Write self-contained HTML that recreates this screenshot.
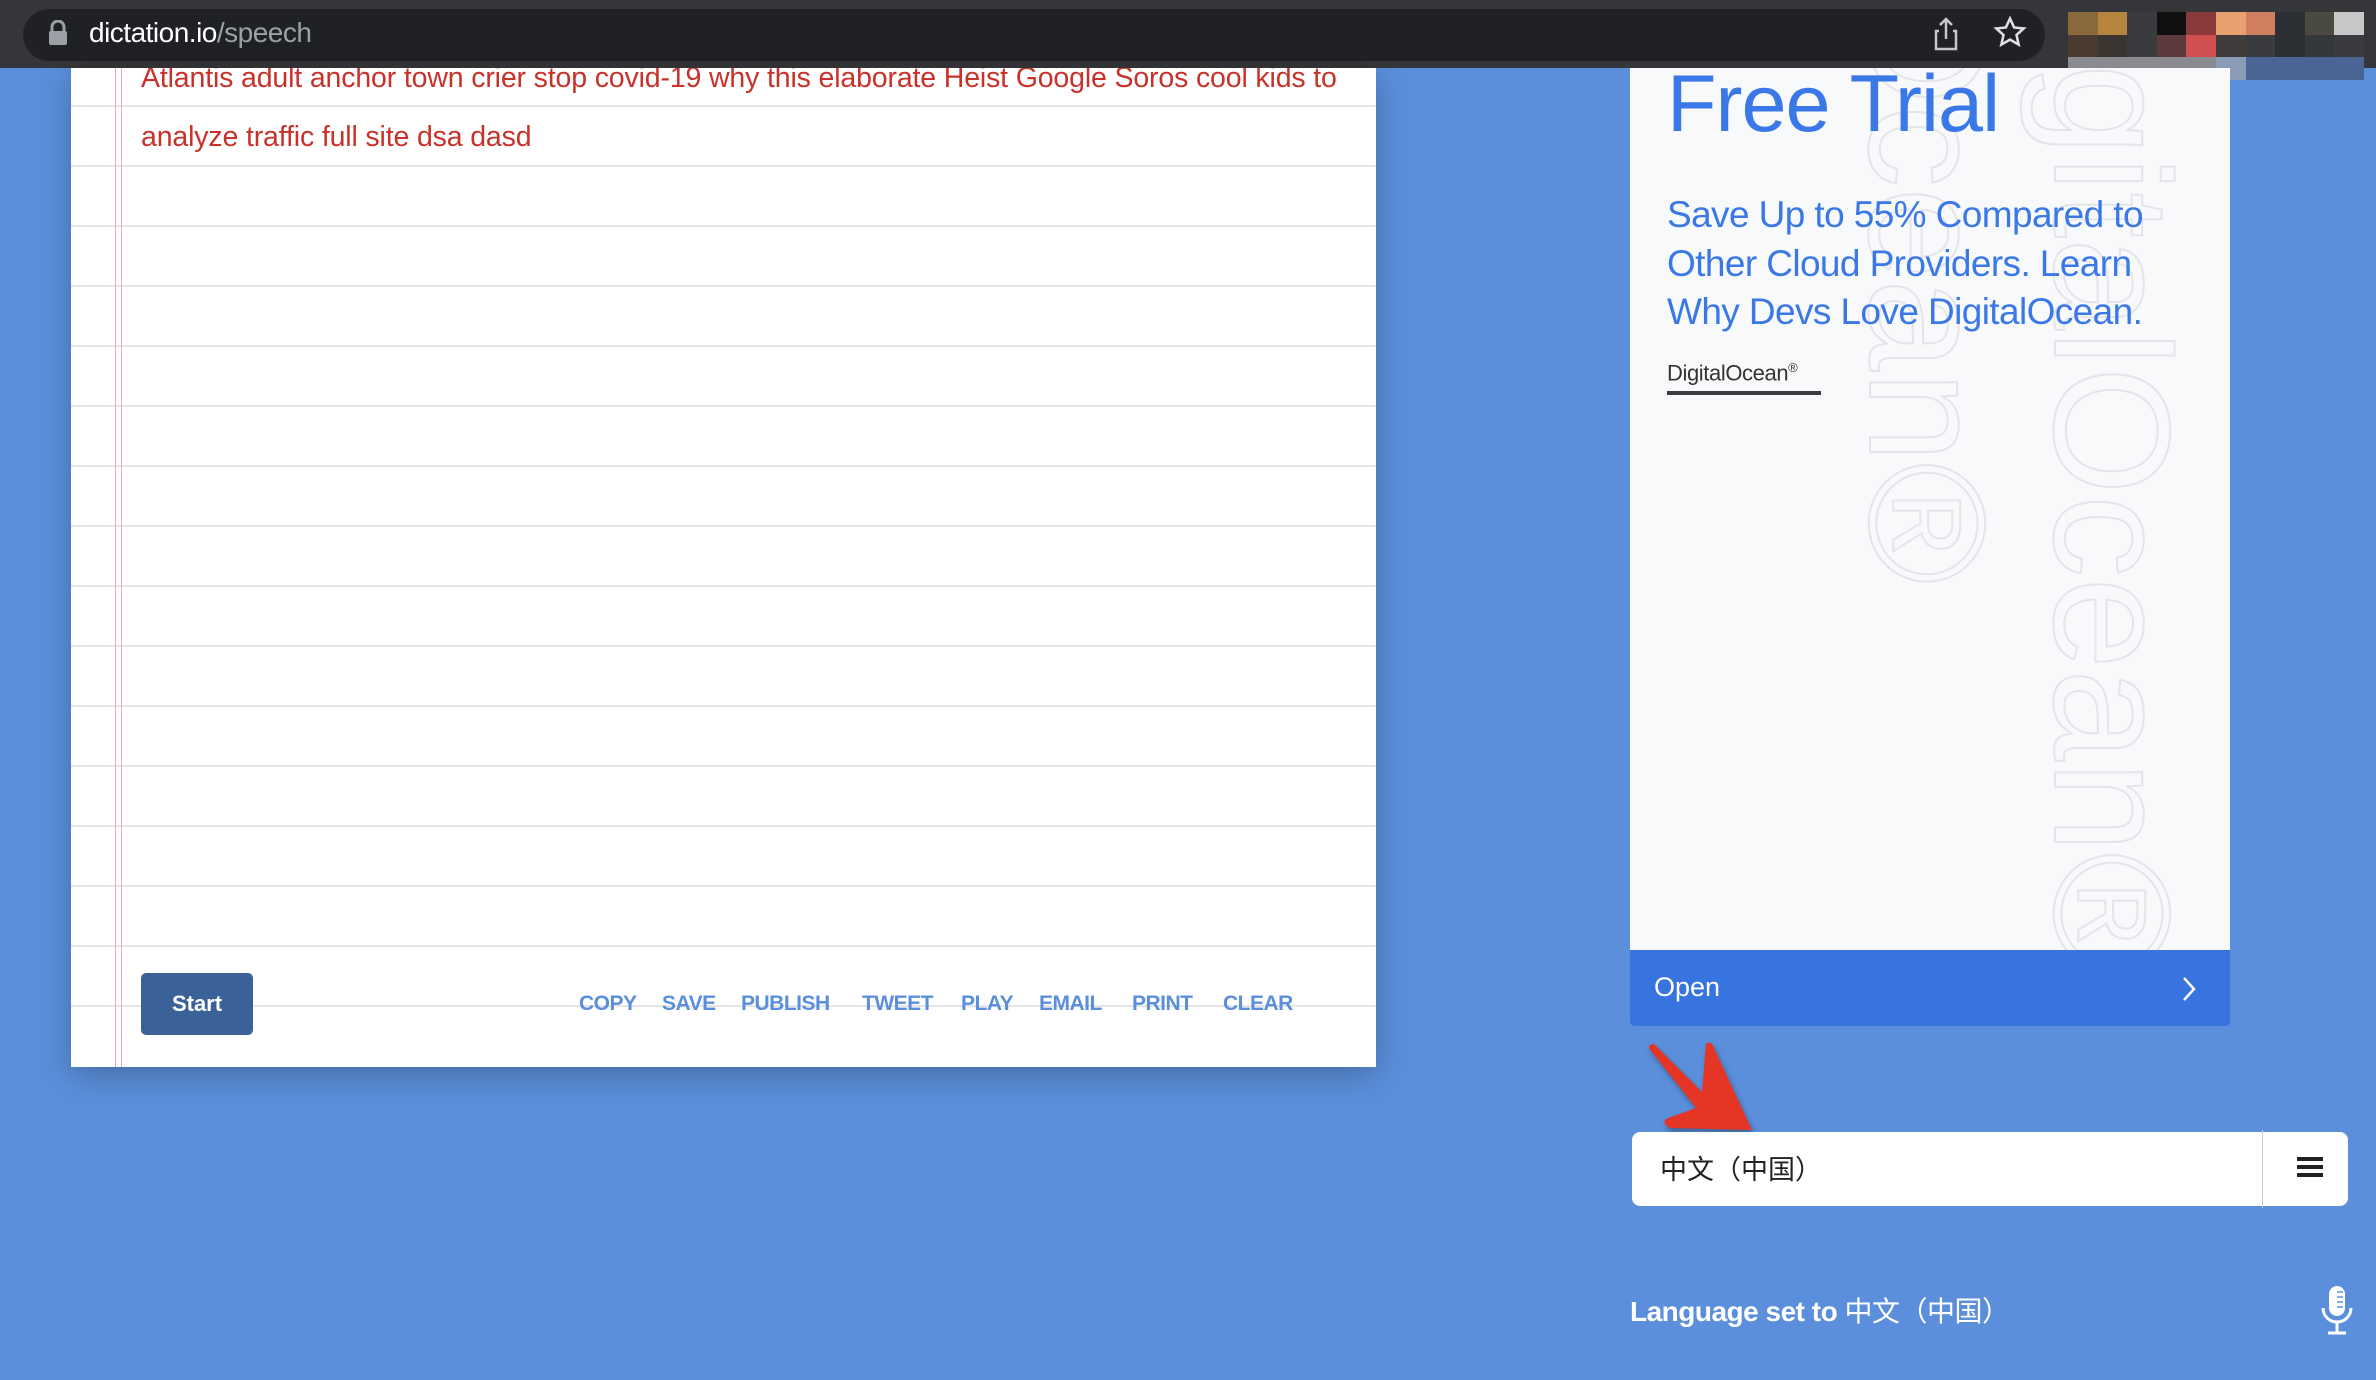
<!DOCTYPE html>
<html><head><meta charset="utf-8"><style>
*{margin:0;padding:0;box-sizing:border-box}
body{width:2376px;height:1380px;overflow:hidden;background:#5b8fdb;font-family:"Liberation Sans","Noto Sans CJK SC",sans-serif;position:relative}
.abs{position:absolute}
#bar{left:0;top:0;width:2376px;height:68px;background:#35363a}
#pill{left:23px;top:9px;width:2022px;height:52px;background:#202124;border-radius:26px}
#url{left:89px;top:17px;font-size:28px;color:#fff;letter-spacing:-0.5px}
#url span{color:#9aa0a6}
#paper{left:71px;top:68px;width:1305px;height:999px;background:#fff;box-shadow:0 8px 30px rgba(0,0,0,.25);overflow:hidden}
.hl{position:absolute;left:0;width:1305px;height:2px;background:#e6e6e6}
.vl{position:absolute;top:0;width:1px;height:999px;background:#e7a9bd}
.txt{position:absolute;left:70px;font-size:28.5px;color:#c8322a;white-space:nowrap;letter-spacing:-0.15px}
#start{left:70px;top:905px;width:112px;height:62px;background:#3b6199;border-radius:5px;color:#fff;font-weight:bold;font-size:22px;text-align:center;line-height:62px}
.lk{position:absolute;top:924px;font-size:21px;font-weight:bold;color:#5b8fdb;letter-spacing:-0.5px}
#ad{left:1630px;top:68px;width:600px;height:958px;background:#f8f9fb;overflow:hidden;border-radius:0 0 4px 4px}
#open{left:0;top:882px;width:600px;height:76px;background:#3774e0;color:#fff;font-size:27px;padding:0 0 0 24px;line-height:74px}
#sel{left:1632px;top:1132px;width:716px;height:74px;background:#fff;border-radius:8px}
</style></head><body>
<div id="bar" class="abs"></div>
<div id="pill" class="abs"></div>
<svg class="abs" style="left:48px;top:20px" width="20" height="26" viewBox="0 0 20 26"><path d="M4 11V7a6 6 0 0 1 12 0v4" stroke="#9aa0a6" stroke-width="3" fill="none"/><rect x="1" y="11" width="18" height="14" rx="2" fill="#9aa0a6"/></svg>
<div id="url" class="abs">dictation.io<span>/speech</span></div>
<svg class="abs" style="left:1930px;top:16px" width="32" height="36" viewBox="0 0 32 36"><path d="M16 3v20M10 9l6-6 6 6M9 15H6v18h20V15h-3" stroke="#c8c8c8" stroke-width="2.5" fill="none"/></svg>
<svg class="abs" style="left:1993px;top:15px" width="34" height="34" viewBox="0 0 24 24"><path d="M12 2.5l2.9 6.3 6.8.7-5.1 4.6 1.5 6.8L12 17.4l-6.1 3.5 1.5-6.8L2.3 9.5l6.8-.7z" stroke="#e0e0e0" stroke-width="1.8" fill="none"/></svg>
<div class="abs" style="left:2068px;top:12px;width:296px;height:68px;display:grid;grid-template-columns:repeat(10,1fr)">
<div style="background:#8a6a3c"></div><div style="background:#b5843d"></div><div style="background:#3a3b3e"></div><div style="background:#101010"></div><div style="background:#8a3a3a"></div><div style="background:#e9a070"></div><div style="background:#d08060"></div><div style="background:#2c3034"></div><div style="background:#4a4a40"></div><div style="background:#c8c8c8"></div>
<div style="background:#4a3a30"></div><div style="background:#3a3530"></div><div style="background:#3a3b3e"></div><div style="background:#5a3a3a"></div><div style="background:#d05050"></div><div style="background:#403c3c"></div><div style="background:#3a3b3e"></div><div style="background:#2c3034"></div><div style="background:#34383c"></div><div style="background:#3a3b3e"></div>
<div style="background:#8a8b90"></div><div style="background:#8a8b90"></div><div style="background:#8a8b90"></div><div style="background:#8a8b90"></div><div style="background:#8a8b90"></div><div style="background:#8a9bb8"></div><div style="background:#4a6494"></div><div style="background:#4a6494"></div><div style="background:#4a6494"></div><div style="background:#4a6494"></div>
</div>

<div id="paper" class="abs">
<div class="hl" style="top:37px"></div><div class="hl" style="top:97px"></div><div class="hl" style="top:157px"></div><div class="hl" style="top:217px"></div><div class="hl" style="top:277px"></div><div class="hl" style="top:337px"></div><div class="hl" style="top:397px"></div><div class="hl" style="top:457px"></div><div class="hl" style="top:517px"></div><div class="hl" style="top:577px"></div><div class="hl" style="top:637px"></div><div class="hl" style="top:697px"></div><div class="hl" style="top:757px"></div><div class="hl" style="top:817px"></div><div class="hl" style="top:877px"></div><div class="hl" style="top:937px"></div>
<div class="vl" style="left:44px"></div><div class="vl" style="left:50px"></div>
<div class="txt" style="top:-6px">Atlantis adult anchor town crier stop covid-19 why this elaborate Heist Google Soros cool kids to</div>
<div class="txt" style="top:53px">analyze traffic full site dsa dasd</div>
<div id="start" class="abs">Start</div>
<div class="lk" style="left:508px">COPY</div><div class="lk" style="left:591px">SAVE</div><div class="lk" style="left:670px">PUBLISH</div><div class="lk" style="left:791px">TWEET</div><div class="lk" style="left:890px">PLAY</div><div class="lk" style="left:968px">EMAIL</div><div class="lk" style="left:1061px">PRINT</div><div class="lk" style="left:1152px">CLEAR</div>
</div>

<div id="ad" class="abs">
<svg class="abs" style="left:0;top:0" width="600" height="882">
<g fill="none" stroke="#e3e5e8" stroke-width="2" font-family="Liberation Sans" font-size="165">
<text transform="translate(425,-160) rotate(90)">DigitalOcean®</text>
<text transform="translate(240,-550) rotate(90)">DigitalOcean®</text>
</g></svg>
<div class="abs" style="left:37px;top:-10px;font-size:81px;color:#3b78e7;letter-spacing:-1px">Free Trial</div>
<div class="abs" style="left:37px;top:123px;font-size:37px;line-height:48.5px;color:#3b78e7;letter-spacing:-0.6px">Save Up to 55% Compared to<br>Other Cloud Providers. Learn<br>Why Devs Love DigitalOcean.</div>
<div class="abs" style="left:37px;top:292px;font-size:22px;color:#333;letter-spacing:-0.4px">DigitalOcean<sup style="font-size:13px">®</sup></div>
<div class="abs" style="left:37px;top:323px;width:154px;height:4px;background:#3c3d42"></div>
<div id="open" class="abs">Open</div>
<svg class="abs" style="left:551px;top:907px" width="16" height="28" viewBox="0 0 16 28"><path d="M3 3l10 11L3 25" stroke="#fff" stroke-width="2.5" fill="none"/></svg>
</div>

<svg class="abs" style="left:1640px;top:1040px" width="120" height="100" viewBox="0 0 120 100"><path d="M12 12 Q5 5 14 4 L62 52 L66 4 Q72 0 74 8 L112 90 L30 88 Q20 82 28 78 L56 68 Z" fill="#e53525" style="filter:drop-shadow(2px 4px 3px rgba(0,0,0,.3))"/></svg>

<div id="sel" class="abs">
<div class="abs" style="left:28px;top:18px;font-size:27px;color:#222;font-family:'Noto Sans CJK SC',sans-serif;line-height:36px">中文（中国）</div>
<div class="abs" style="left:630px;top:-2px;width:1px;height:78px;background:#ccc"></div>
<div class="abs" style="left:665px;top:25px;width:26px;height:4px;background:#222;box-shadow:0 8px 0 #222,0 16px 0 #222"></div>
</div>

<div class="abs" style="left:1630px;top:1290px;font-size:28px;font-weight:bold;color:#fff;letter-spacing:-0.5px">Language set to <span style="font-weight:normal;font-family:'Noto Sans CJK SC',sans-serif">中文（中国）</span></div>
<svg class="abs" style="left:2320px;top:1284px" width="34" height="52" viewBox="0 0 34 52"><rect x="9" y="2" width="16" height="30" rx="8" fill="#fff"/><path d="M3 24a14 14 0 0 0 28 0M17 38v10M8 49h18" stroke="#fff" stroke-width="3" fill="none"/><path d="M17 8h6M17 13h6M17 18h6M17 23h6" stroke="#5b8fdb" stroke-width="1.5"/></svg>
</body></html>
